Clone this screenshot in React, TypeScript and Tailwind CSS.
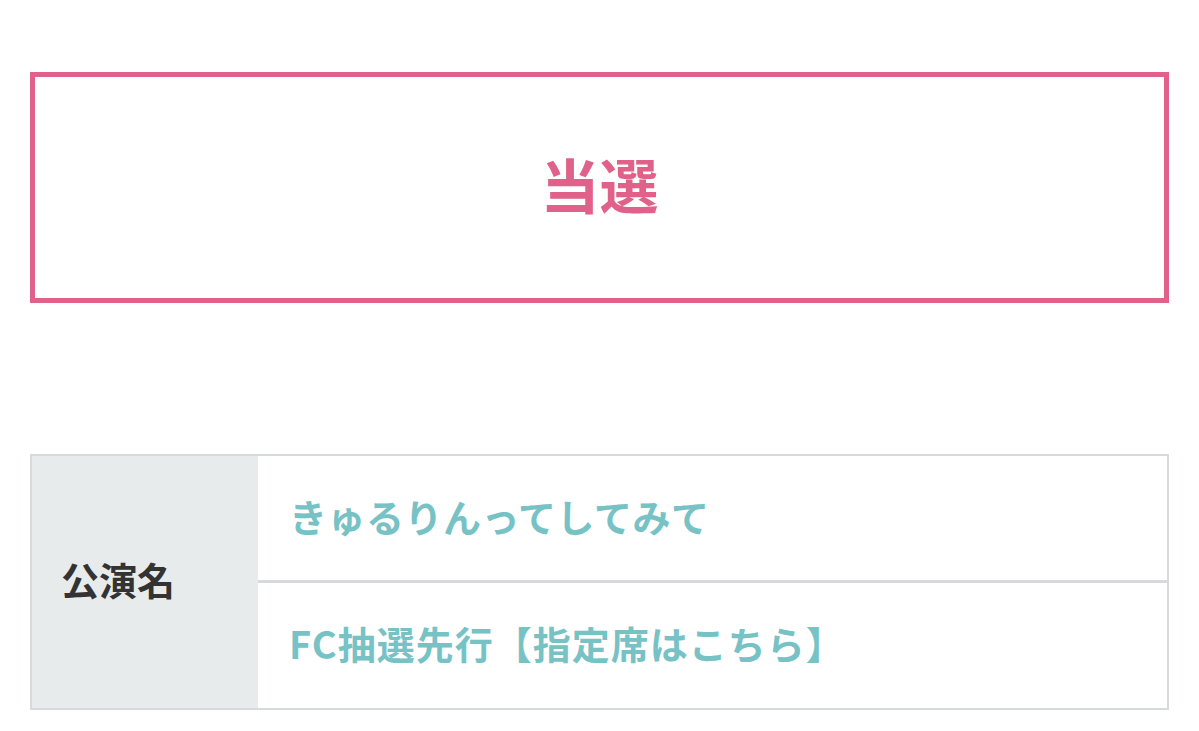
const FONT = '"Noto Sans CJK JP", "Noto Sans", sans-serif';

export default function App() {
  return (
    <div className="min-h-[731px] w-full bg-white" style={{ fontFamily: FONT }}>
      <div className="px-[30px] pt-[72px]">
        {/* 結果 */}
        <div className="flex h-[231px] items-center justify-center border-[5px] border-[#e0628a] pb-[8px]">
          <span className="text-[59px] font-bold leading-none text-[#e0628a]">当選</span>
        </div>

        {/* 公演情報 */}
        <div className="mt-[151px] flex border-2 border-[#d6dadb]">
          <div className="flex w-[226px] shrink-0 items-center bg-[#e8ebec] pb-[8px] pl-[29px]">
            <span className="text-[38px] font-bold text-[#333333]">公演名</span>
          </div>
          <div className="flex flex-1 flex-col">
            <div className="flex h-[124px] items-center pb-[6px] pl-[31px]">
              <span className="text-[38px] font-bold tracking-[0.5px] text-[#77c2c5]">きゅるりんってしてみて</span>
            </div>
            <div className="flex h-[128px] items-center border-t-[3px] border-[#d6dadb] pb-[6px] pl-[31px]">
              <span className="text-[38px] font-bold tracking-[1px] text-[#77c2c5]">FC抽選先行【指定席はこちら】</span>
            </div>
          </div>
        </div>
      </div>
    </div>
  );
}
